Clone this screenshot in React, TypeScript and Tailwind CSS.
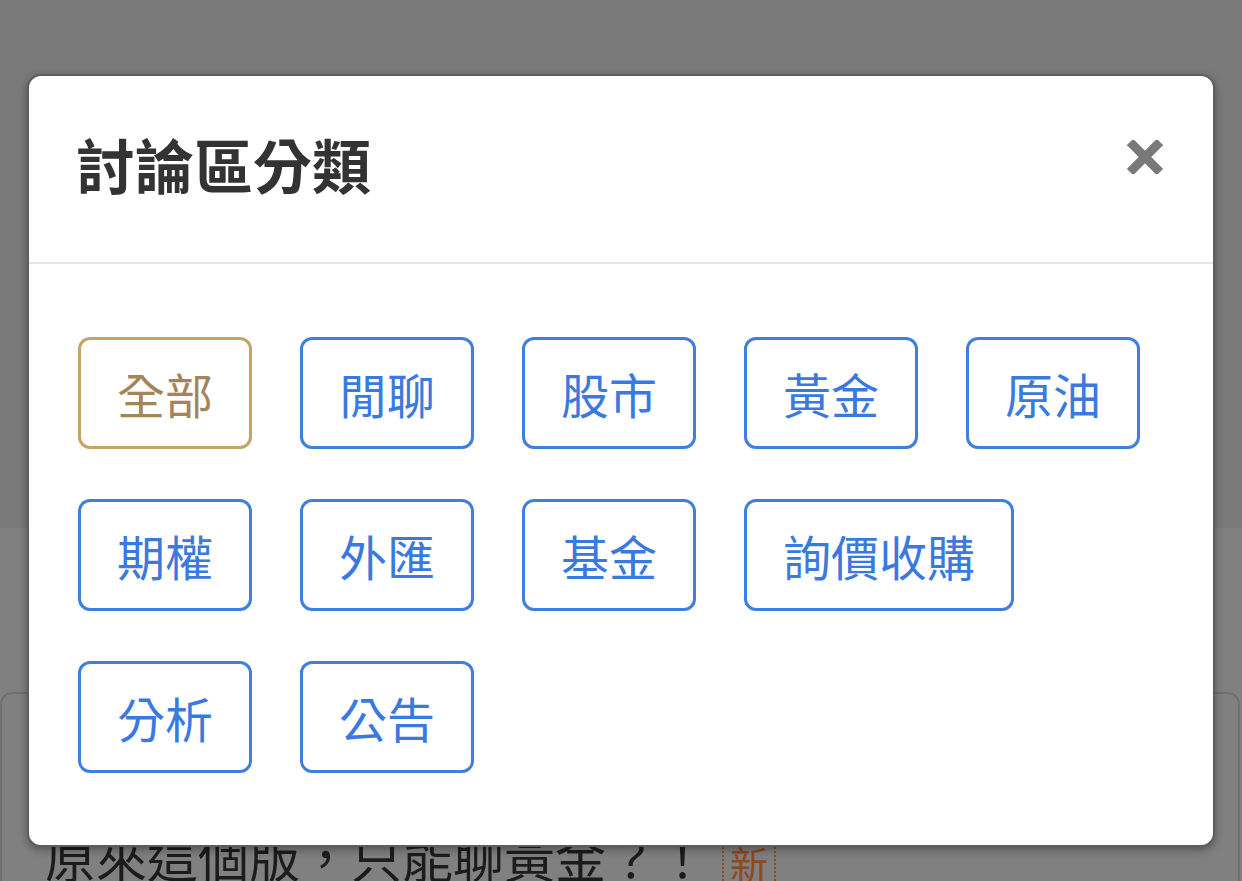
import React from "react";

const FONT = { fontFamily: '"Noto Sans CJK TC", "Noto Sans CJK SC", "Noto Sans", sans-serif' };

const cats = ["全部", "閒聊", "股市", "黃金", "原油", "期權", "外匯", "基金", "詢價收購", "分析", "公告"];

export default function App() {
  return (
    <div className="relative w-[1242px] h-[881px] overflow-hidden" style={FONT}>
      {/* underlying page (dimmed) */}
      <div className="flex flex-col h-full overflow-hidden">
        <div className="h-[528px] shrink-0 bg-[#7a7a7a]" />
        <div className="flex-1 shrink-0 bg-[#808080] pt-[164px]">
          <div className="mr-[2px] h-[300px] rounded-[12px] border-2 border-[#707070] pl-[43px] pt-[124px]">
            <div className="flex items-center whitespace-nowrap text-[51px] leading-[1.5] text-[#1c1c1c]">
              <span>原來這個版，只能聊黃金？！</span>
              <span className="ml-[14px] mt-[12px] border-2 border-dotted border-[#8d4a1e] px-[6px] text-[38px] leading-[1.3] text-[#8d4a1e]">新</span>
            </div>
          </div>
        </div>
      </div>

      {/* modal */}
      <div className="absolute left-[27px] top-[74px] w-[1188px] h-[773px] rounded-[14px] border-2 border-[#5e5e5e] bg-white shadow-[0_3px_8px_rgba(0,0,0,0.35)] flex flex-col">
        <div className="flex h-[188px] shrink-0 items-center justify-between border-b-2 border-[#e6e6e6] pl-[47px] pr-[50px] pb-[12px]">
          <h1 className="text-[59px] font-bold leading-none text-[#333333]">討論區分類</h1>
          <button className="self-start mt-[64px] w-[36px] h-[34px]" aria-label="close">
            <svg width="36" height="34" viewBox="0 0 36 34">
              <line x1="3" y1="2" x2="33" y2="32" stroke="#797979" strokeWidth="9" />
              <line x1="33" y1="2" x2="3" y2="32" stroke="#797979" strokeWidth="9" />
            </svg>
          </button>
        </div>
        <div className="flex flex-wrap gap-x-[48px] gap-y-[50px] pl-[49px] pr-[49px] pt-[73px]">
          {cats.map((c, i) => (
            <button
              key={c}
              className={
                i === 0
                  ? "h-[112px] px-[36px] rounded-[12px] border-[3px] border-[#c4a566] text-[48px] leading-none text-[#a4855a] bg-white"
                  : "h-[112px] px-[36px] rounded-[12px] border-[3px] border-[#3f7fe0] text-[48px] leading-none text-[#3a7ae0] bg-white"
              }
            >
              {c}
            </button>
          ))}
        </div>
      </div>
    </div>
  );
}
